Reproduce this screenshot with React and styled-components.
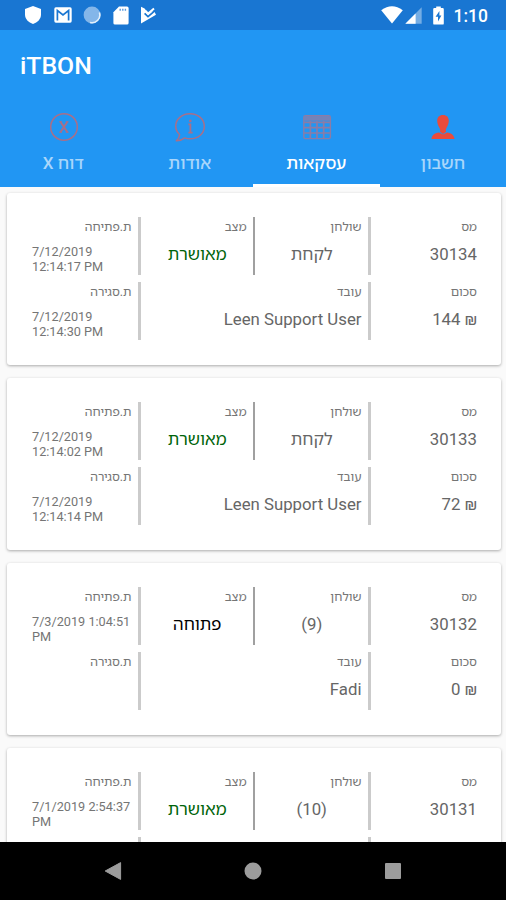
import React from 'react';
import styled, { createGlobalStyle } from 'styled-components';

const transactions = [
  {
    id: '30134',
    table: 'לקחת',
    status: 'מאושרת',
    approved: true,
    opened: ['7/12/2019', '12:14:17 PM'],
    closed: ['7/12/2019', '12:14:30 PM'],
    worker: 'Leen Support User',
    total: '144',
  },
  {
    id: '30133',
    table: 'לקחת',
    status: 'מאושרת',
    approved: true,
    opened: ['7/12/2019', '12:14:02 PM'],
    closed: ['7/12/2019', '12:14:14 PM'],
    worker: 'Leen Support User',
    total: '72',
  },
  {
    id: '30132',
    table: '(9)',
    status: 'פתוחה',
    approved: false,
    opened: ['7/3/2019 1:04:51', 'PM'],
    closed: [],
    worker: 'Fadi',
    total: '0',
  },
  {
    id: '30131',
    table: '(10)',
    status: 'מאושרת',
    approved: true,
    opened: ['7/1/2019 2:54:37', 'PM'],
  },
];

const ShieldIcon = () => (
  <svg width="18" height="20" viewBox="0 0 18 20">
    <path d="M9 1 L17 4 V9.5 C17 14 13.5 17.5 9 19 C4.5 17.5 1 14 1 9.5 V4 Z" fill="#fff" />
  </svg>
);

const MailIcon = () => (
  <svg width="18" height="16" viewBox="0 0 18 16">
    <rect x="0.3" y="0.3" width="17.4" height="15.4" rx="1.6" fill="#fff" />
    <path d="M3.4 13.4 V3.6 L9 8 L14.6 3.6 V13.4" fill="none" stroke="#1976d2" strokeWidth="1.7" />
  </svg>
);

const SyncIcon = () => (
  <svg width="18" height="18" viewBox="0 0 18 18">
    <circle cx="9" cy="9" r="8.4" fill="#84b6e9" />
    <path d="M16.4 6.5 A7.7 7.7 0 0 1 7 16.4" fill="none" stroke="#e4f0fb" strokeWidth="1.6" />
  </svg>
);

const SdCardIcon = () => (
  <svg width="16" height="19" viewBox="0 0 16 19">
    <path d="M6 0.5 H14 Q15.6 0.5 15.6 2.1 V16.9 Q15.6 18.5 14 18.5 H2 Q0.4 18.5 0.4 16.9 V6.2 Z" fill="#fff" />
    <path d="M7.2 2.8 V4.8 M9.8 2.8 V4.8 M12.4 2.8 V4.8" stroke="#5b9bdd" strokeWidth="1.4" />
  </svg>
);

const PlayCheckIcon = () => (
  <svg width="17" height="18" viewBox="0 0 17 18">
    <path d="M1 0.8 L4.6 2.6 L8 7 L14 5 L16 8.8 L1 17.4 Z" fill="#fff" />
    <path d="M4.6 7.4 L8 10.6 L15 4.6" fill="none" stroke="#1976d2" strokeWidth="1.7" />
    <path d="M5.6 5 L8.2 7.6 L14 2.6" fill="none" stroke="#fff" strokeWidth="2" />
  </svg>
);

const WifiIcon = () => (
  <svg width="22" height="18" viewBox="0 0 22 18">
    <path d="M0.2 4.2 Q11 -3.6 21.8 4.2 L11 17.6 Z" fill="#fff" />
  </svg>
);

const SignalIcon = () => (
  <svg width="17" height="17" viewBox="0 0 17 17">
    <path d="M0.3 16.7 L16.7 0.3 V16.7 Z" fill="#75ade4" />
    <path d="M0.3 16.7 L10.6 6.4 V16.7 Z" fill="#fff" />
  </svg>
);

const BatteryIcon = () => (
  <svg width="11" height="19" viewBox="0 0 11 19">
    <path d="M3.2 0.4 H7.8 V2 H9.6 Q10.8 2 10.8 3.2 V17.4 Q10.8 18.6 9.6 18.6 H1.4 Q0.2 18.6 0.2 17.4 V3.2 Q0.2 2 1.4 2 H3.2 Z" fill="#fff" />
    <path d="M6.4 5 L2.6 10.8 H5 V15.4 L8.4 9.4 H6.4 Z" fill="#1976d2" />
  </svg>
);

const ReportIcon = () => (
  <svg width="30" height="30" viewBox="0 0 30 30" fill="none" stroke="#a96f88">
    <circle cx="15" cy="15" r="13.3" strokeWidth="1.5" />
    <path d="M11.4 9.8 L18.4 20.2 M18.4 9.8 L11.4 20.2" strokeWidth="2" />
    <path d="M10.2 9.7 H13 M16.8 9.7 H19.6 M10.2 20.3 H13 M16.8 20.3 H19.6" strokeWidth="1.1" />
  </svg>
);

const AboutIcon = () => (
  <svg width="32" height="30" viewBox="0 0 32 30" fill="none" stroke="#a96f88">
    <path
      d="M16 1.7 C24.3 1.7 30.3 7.2 30.3 14.2 C30.3 21.4 24.3 26.8 16.2 26.8 C14.2 26.8 12.3 26.5 10.7 25.9 C8.3 27.9 5.5 28.9 2.3 28.8 C4.5 26.8 5.5 24.7 5.6 22.5 C3.1 20.2 1.7 17.5 1.7 14.2 C1.7 7.2 7.7 1.7 16 1.7 Z"
      strokeWidth="1.5"
      strokeLinejoin="round"
    />
    <path d="M14.4 12.3 H16.4 V20.4 M14.4 20.6 H18.6" strokeWidth="1.8" />
    <circle cx="16.3" cy="8.9" r="1.3" fill="#a96f88" stroke="none" />
  </svg>
);

const TableIcon = () => (
  <svg width="30" height="26" viewBox="0 0 30 26" fill="none" stroke="#8b7ca6">
    <rect x="1.8" y="1.8" width="26.6" height="22.8" rx="1.6" strokeWidth="1.4" />
    <path d="M2 4.4 H28" stroke="#7583b8" strokeWidth="4.6" />
    <path d="M2 8.3 H28 M2 13.6 H28 M2 19 H28 M8.4 7 V24 M15 7 V24 M21.7 7 V24" strokeWidth="1.7" />
  </svg>
);

const UserIcon = () => (
  <svg width="24" height="26" viewBox="0 0 24 26" fill="#e94b3c">
    <path d="M12 1 C8.2 1 6.2 3.4 6.2 6.8 C6.2 9.8 7.4 12 8.6 14 C9.2 15.2 9.2 16.4 9 17.8 L12 20 L15 17.8 C14.8 16.4 14.8 15.2 15.4 14 C16.6 12 17.8 9.8 17.8 6.8 C17.8 3.4 15.8 1 12 1 Z" />
    <path d="M8 18.4 L12 20.6 L16 18.4 C20.6 19.2 23 20.8 23.6 25 H0.4 C1 20.8 3.4 19.2 8 18.4 Z" />
  </svg>
);

const tabs = [
  { label: 'דוח X', icon: ReportIcon },
  { label: 'אודות', icon: AboutIcon },
  { label: 'עסקאות', icon: TableIcon, active: true },
  { label: 'חשבון', icon: UserIcon },
];

const App = () => {
  return (
    <Screen>
      <GlobalStyle />
      <StatusBar>
        <StatusGroup gap="11.5px">
          <ShieldIcon />
          <MailIcon />
          <SyncIcon />
          <SdCardIcon />
          <PlayCheckIcon />
        </StatusGroup>
        <StatusGroup gap="2px">
          <WifiIcon />
          <SignalIcon />
          <Battery>
            <BatteryIcon />
          </Battery>
          <Clock>1:10</Clock>
        </StatusGroup>
      </StatusBar>
      <Header>
        <Title>iTBON</Title>
        <Tabs>
          {tabs.map(({ label, icon: Icon, active }) => (
            <Tab key={label} $active={active}>
              <TabIcon>
                <Icon />
              </TabIcon>
              <TabLabel dir="rtl">{label}</TabLabel>
            </Tab>
          ))}
        </Tabs>
      </Header>
      <List>
        {transactions.map((item) => (
          <Card key={item.id}>
            <Row>
              <Cell width="109px" line="3px">
                <Label>ת.פתיחה</Label>
                <DateText>
                  {item.opened.map((part) => (
                    <div key={part}>{part}</div>
                  ))}
                </DateText>
              </Cell>
              <Cell width="114px" line="2px" dark>
                <Label>מצב</Label>
                <Value center color={item.approved ? '#00640a' : '#000'}>
                  {item.status}
                </Value>
              </Cell>
              <Cell width="116px" line="3px">
                <Label>שולחן</Label>
                <Value center>{item.table}</Value>
              </Cell>
              <Cell>
                <Label>מס</Label>
                <Value>{item.id}</Value>
              </Cell>
            </Row>
            {item.worker ? (
              <Row>
                <Cell width="109px" line="3px">
                  <Label>ת.סגירה</Label>
                  <DateText>
                    {item.closed.map((part) => (
                      <div key={part}>{part}</div>
                    ))}
                  </DateText>
                </Cell>
                <Cell width="230px" line="3px">
                  <Label>עובד</Label>
                  <Value>{item.worker}</Value>
                </Cell>
                <Cell>
                  <Label>סכום</Label>
                  <Value>
                    {item.total} <Shekel>₪</Shekel>
                  </Value>
                </Cell>
              </Row>
            ) : (
              <Row>
                <Cell width="109px" line="3px" />
                <Cell width="230px" line="3px" />
              </Row>
            )}
          </Card>
        ))}
      </List>
      <NavBar>
        <svg width="18" height="20" viewBox="0 0 18 20">
          <path d="M1.2 10 L16.6 1.6 V18.4 Z" fill="#9c9c9c" stroke="#9c9c9c" strokeLinejoin="round" />
        </svg>
        <svg width="18" height="18" viewBox="0 0 18 18">
          <circle cx="9" cy="9" r="8.5" fill="#9c9c9c" />
        </svg>
        <svg width="18" height="18" viewBox="0 0 18 18">
          <rect x="1" y="1" width="16" height="16" rx="1" fill="#9c9c9c" />
        </svg>
      </NavBar>
    </Screen>
  );
};

const GlobalStyle = createGlobalStyle`
  * {
    box-sizing: border-box;
  }

  body {
    margin: 0;
    background: #fafafa;
    font-family: Roboto, 'Noto Sans Hebrew', 'Open Sans', 'Noto Sans', sans-serif;
  }

  svg {
    display: block;
    flex-shrink: 0;
  }
`;

const Screen = styled.div`
  display: flex;
  flex-direction: column;
  width: 506px;
  height: 900px;
  overflow: hidden;
  background: #fafafa;
`;

const StatusBar = styled.div`
  display: flex;
  align-items: center;
  justify-content: space-between;
  flex-shrink: 0;
  height: 30px;
  padding: 0 18px 0 24px;
  background: #1976d2;
`;

const StatusGroup = styled.div.withConfig({
  shouldForwardProp: (prop) => prop !== 'gap',
})`
  display: flex;
  align-items: center;
  gap: ${(props) => props.gap};
`;

const Battery = styled.div`
  margin-left: 9px;
`;

const Clock = styled.div`
  margin-left: 8px;
  padding-top: 2px;
  color: #fff;
  font-size: 17.5px;
  font-weight: 500;
  line-height: 20px;
`;

const Header = styled.header`
  display: flex;
  flex-direction: column;
  flex-shrink: 0;
  height: 157px;
  background: #2196f3;
`;

const Title = styled.h1`
  height: 72px;
  margin: 0;
  padding-left: 20px;
  color: #fff;
  font-size: 24.8px;
  font-weight: 500;
  line-height: 72px;
`;

const Tabs = styled.nav`
  display: flex;
  flex-grow: 1;
`;

const Tab = styled.div`
  display: flex;
  align-items: center;
  flex: 1;
  flex-direction: column;
  border-bottom: 3px solid ${(props) => (props.$active ? '#fff' : '#2196f3')};
  color: ${(props) => (props.$active ? '#fff' : '#a9d6fb')};
`;

const TabIcon = styled.div`
  display: flex;
  align-items: center;
  justify-content: center;
  height: 48px;
  padding: 1px 0 0 1px;
`;

const TabLabel = styled.div`
  font-size: 17px;
  font-weight: 500;
  line-height: 26px;
`;

const List = styled.main`
  display: flex;
  flex-direction: column;
  flex-grow: 1;
  gap: 13px;
  min-height: 0;
  overflow: hidden;
  padding: 6px 5px 0 7px;
`;

const Card = styled.article`
  display: flex;
  flex-direction: column;
  flex-shrink: 0;
  gap: 7px;
  height: 172px;
  padding: 24px 24px 0 25px;
  border-radius: 3px;
  background: #fff;
  box-shadow: 0 1px 3px rgba(0, 0, 0, 0.32);
`;

const Row = styled.div`
  display: flex;
  height: 58px;
`;

const Cell = styled.div.withConfig({
  shouldForwardProp: (prop) => !['width', 'line', 'dark'].includes(prop),
})`
  flex: ${(props) => (props.width ? `0 0 ${props.width}` : '1')};
  min-width: 0;
  padding-right: ${(props) => (props.line ? '6.5px' : '0')};
  border-right: ${(props) => props.line || 0} solid ${(props) => (props.dark ? '#a0a0a0' : '#cbcbcb')};
`;

const Label = styled.div`
  padding-top: 1px;
  color: #757575;
  direction: rtl;
  font-size: 12.3px;
  line-height: 18px;
  white-space: nowrap;
`;

const Value = styled.div.withConfig({
  shouldForwardProp: (prop) => !['center', 'color'].includes(prop),
})`
  margin-right: ${(props) => (props.center ? '-7px' : '0')};
  padding-top: 6px;
  color: ${(props) => props.color || '#666'};
  font-size: 16.8px;
  line-height: 24px;
  text-align: ${(props) => (props.center ? 'center' : 'right')};
  white-space: nowrap;
`;

const Shekel = styled.span`
  font-size: 16px;
`;

const DateText = styled.div`
  padding-top: 8px;
  color: #757575;
  font-size: 12.7px;
  line-height: 15px;
  white-space: nowrap;
`;

const NavBar = styled.footer`
  display: flex;
  align-items: center;
  flex-shrink: 0;
  justify-content: space-between;
  height: 58px;
  padding: 0 104px;
  background: #000;
`;

export default App;
